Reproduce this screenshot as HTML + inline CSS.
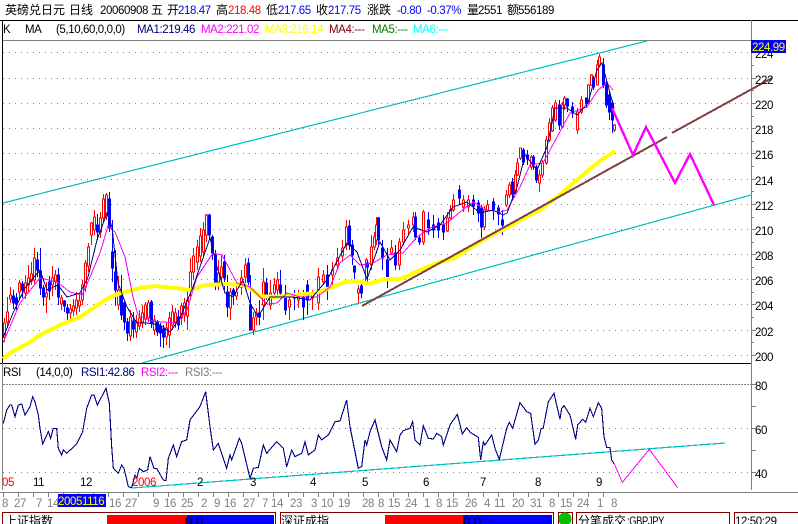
<!DOCTYPE html>
<html><head><meta charset="utf-8"><style>
html,body{margin:0;padding:0;background:#fff}
svg{display:block}
svg *{shape-rendering:crispEdges}
text{font-family:"Liberation Sans","WenQuanYi Zen Hei","Noto Sans CJK SC",sans-serif;font-size:11.5px;letter-spacing:-.4px;fill:#000}
text.h{font-size:12px;letter-spacing:0}
.c{fill:#0000ff}.r{fill:#ff0000}.g{fill:#808080}
</style></head><body>
<svg width="798" height="524" viewBox="0 0 798 524" xmlns="http://www.w3.org/2000/svg">
<rect width="798" height="524" fill="#fff"/>
<!-- frames -->
<path d="M0 20.5H798" stroke="#000" fill="none"/>
<path d="M3 40.5H751" stroke="#808080" fill="none"/>
<path d="M0 363.5H751" stroke="#000" fill="none"/>
<path d="M2.5 20V363" stroke="#000" fill="none"/>
<path d="M2.5 363V490" stroke="#808080" fill="none"/>
<path d="M751.5 20V490" stroke="#808080" fill="none"/>
<path d="M3 384.5H751" stroke="#808080" stroke-dasharray="2 1" fill="none"/>
<path d="M3 52.5H751M3 78.5H751M3 103.5H751M3 128.5H751M3 153.5H751M3 179.5H751M3 204.5H751M3 229.5H751M3 254.5H751M3 279.5H751M3 304.5H751M3 330.5H751M3 355.5H751M3 428.5H751M3 472.5H751" stroke="#808080" stroke-dasharray="1 5" fill="none"/>
<path d="M752 52.5h4M752 65.5h2M752 78.5h4M752 90.5h2M752 103.5h4M752 116.5h2M752 128.5h4M752 141.5h2M752 153.5h4M752 166.5h2M752 179.5h4M752 191.5h2M752 204.5h4M752 217.5h2M752 229.5h4M752 242.5h2M752 254.5h4M752 267.5h2M752 279.5h4M752 292.5h2M752 304.5h4M752 317.5h2M752 330.5h4M752 342.5h2M752 355.5h4M752 384.5h4M752 406.5h4M752 428.5h4M752 450.5h4M752 472.5h4" stroke="#808080" fill="none"/>

<!-- header -->
<text x="5" y="14" class="h">英磅兑日元</text>
<text x="69" y="14" class="h">日线</text>
<text x="100" y="14">20060908</text>
<text x="151" y="14" class="h">五</text>
<text x="167" y="14" class="h">开</text><text x="178" y="14" class="c">218.47</text>
<text x="216" y="14" class="h">高</text><text x="228" y="14" class="r">218.48</text>
<text x="266" y="14" class="h">低</text><text x="278" y="14" class="c">217.65</text>
<text x="316" y="14" class="h">收</text><text x="328" y="14" class="c">217.75</text>
<text x="367" y="14" class="h">涨跌</text>
<text x="397" y="14" class="c">-0.80</text><text x="427" y="14" class="c">-0.37%</text>
<text x="467" y="14" class="h">量</text><text x="478" y="14">2551</text>
<text x="507" y="14" class="h">额</text><text x="518" y="14">556189</text>

<text x="3" y="33">K</text><text x="25" y="33">MA</text>
<text x="56" y="33">(5,10,60,0,0,0)</text>
<text x="137" y="33" style="fill:#000080">MA1:219.46</text>
<text x="201" y="33" style="fill:#ff00ff">MA2:221.02</text>
<text x="265" y="33" style="fill:#ffff00">MA3:216.14</text>
<text x="329" y="33" style="fill:#800000">MA4:---</text>
<text x="372" y="33" style="fill:#008000">MA5:---</text>
<text x="413" y="33" style="fill:#00ffff">MA6:---</text>

<!-- channel lines -->
<g fill="none" stroke="#00bfbf" stroke-width="1.2">
<path d="M3 203L647 41"/>
<path d="M142 363L751 195"/>
</g>

<!-- candles -->
<path fill="none" stroke="#ff0000" d="M4.5 318V342M7.5 297V328M10.5 287V303M19.5 280V300M25.5 275V299M28.5 265V292M31.5 262V285M34.5 248V284M46.5 282V313M52.5 266V296M55.5 270V290M61.5 295V310M70.5 304V319M73.5 299V316M76.5 292V315M79.5 295V312M82.5 280V305M85.5 260V292M88.5 243V272M91.5 222V245M94.5 210V235M100.5 212V238M103.5 194V222M106.5 193V220M118.5 276V310M130.5 310V341M136.5 315V338M139.5 310V330M142.5 305V328M145.5 302V325M148.5 300V322M154.5 315V335M166.5 322V345M169.5 312V348M172.5 305V330M175.5 308V328M181.5 303V325M184.5 298V322M187.5 290V330M190.5 258V300M193.5 248V280M197.5 240V270M200.5 228V262M203.5 222V256M206.5 214V242M218.5 260V290M221.5 255V285M230.5 288V320M236.5 285V300M241.5 270V295M245.5 258V285M253.5 312V335M256.5 308V325M263.5 268V320M270.5 280V310M274.5 278V298M277.5 272V295M289.5 295V320M298.5 290V308M312.5 290V310M318.5 268V310M323.5 270V285M332.5 262V285M337.5 248V270M342.5 240V262M346.5 220V250M358.5 285V303M366.5 258V285M371.5 235V270M374.5 232V250M376.5 217V245M391.5 240V255M399.5 238V270M403.5 222V245M408.5 220V235M413.5 212V232M423.5 210V245M447.5 212V232M450.5 205V220M453.5 194V212M463.5 195V212M468.5 195V212M484.5 206V230M487.5 200V212M506.5 190V207M509.5 182V198M515.5 170V194M517.5 158V176M520.5 148V160M531.5 155V170M539.5 170V192M542.5 160V178M546.5 136V165M549.5 118V142M552.5 105V132M555.5 100V122M562.5 102V128M564.5 96V110M577.5 108V134M581.5 96V114M588.5 84V105M591.5 74V86M597.5 60V85M599.5 54V66M614.5 124V132"/>
<path fill="#fff" stroke="#ff0000" d="M3.5 323h2v14h-2zM6.5 312h2v10h-2zM9.5 295h2v4h-2zM18.5 283h2v9h-2zM24.5 283h2v10h-2zM27.5 278h2v7h-2zM30.5 274h2v7h-2zM33.5 258h2v22h-2zM45.5 293h2v4h-2zM51.5 278h2v7h-2zM54.5 275h2v6h-2zM60.5 298h2v6h-2zM69.5 309h2v4h-2zM72.5 306h2v5h-2zM75.5 300h2v8h-2zM78.5 301h2v5h-2zM81.5 285h2v15h-2zM84.5 263h2v24h-2zM87.5 247h2v19h-2zM90.5 223h2v12h-2zM93.5 217h2v13h-2zM99.5 218h2v14h-2zM102.5 199h2v19h-2zM105.5 195h2v21h-2zM117.5 290h2v15h-2zM129.5 317h2v19h-2zM135.5 322h2v10h-2zM138.5 318h2v8h-2zM141.5 313h2v9h-2zM144.5 305h2v14h-2zM147.5 303h2v15h-2zM153.5 320h2v10h-2zM165.5 328h2v9h-2zM168.5 318h2v17h-2zM171.5 312h2v13h-2zM174.5 313h2v9h-2zM180.5 306h2v12h-2zM183.5 303h2v12h-2zM186.5 300h2v16h-2zM189.5 272h2v16h-2zM192.5 256h2v16h-2zM196.5 247h2v15h-2zM199.5 236h2v20h-2zM202.5 230h2v22h-2zM205.5 215h2v20h-2zM217.5 273h2v9h-2zM220.5 267h2v10h-2zM229.5 292h2v16h-2zM235.5 292h2v4h-2zM240.5 278h2v9h-2zM244.5 265h2v12h-2zM252.5 318h2v12h-2zM255.5 313h2v4h-2zM262.5 282h2v23h-2zM269.5 293h2v12h-2zM273.5 285h2v8h-2zM276.5 280h2v10h-2zM288.5 300h2v7h-2zM297.5 297h2v3h-2zM311.5 293h2v5h-2zM317.5 277h2v26h-2zM322.5 275h2v7h-2zM331.5 270h2v5h-2zM336.5 258h2v7h-2zM341.5 248h2v8h-2zM345.5 227h2v18h-2zM357.5 289h2v4h-2zM365.5 260h2v23h-2zM370.5 247h2v18h-2zM373.5 237h2v10h-2zM375.5 225h2v15h-2zM390.5 248h2v5h-2zM398.5 242h2v23h-2zM402.5 230h2v12h-2zM407.5 225h2v3h-2zM412.5 217h2v8h-2zM422.5 212h2v30h-2zM446.5 218h2v13h-2zM449.5 210h2v8h-2zM452.5 200h2v10h-2zM462.5 200h2v7h-2zM467.5 200h2v7h-2zM483.5 210h2v17h-2zM486.5 205h2v5h-2zM505.5 195h2v10h-2zM508.5 185h2v10h-2zM514.5 175h2v17h-2zM516.5 163h2v12h-2zM519.5 148h2v10h-2zM530.5 157h2v10h-2zM538.5 175h2v8h-2zM541.5 163h2v12h-2zM545.5 140h2v23h-2zM548.5 123h2v17h-2zM551.5 108h2v23h-2zM554.5 103h2v17h-2zM561.5 105h2v22h-2zM563.5 98h2v7h-2zM576.5 112h2v18h-2zM580.5 100h2v12h-2zM587.5 85h2v18h-2zM590.5 75h2v10h-2zM596.5 65h2v20h-2zM598.5 57h2v8h-2zM613.5 125h2v5h-2z"/>
<path fill="#0000ff" stroke="#0000ff" d="M13.5 290V309M12.5 296h2v7h-2zM16.5 293V310M15.5 298h2v6h-2zM22.5 281V298M21.5 284h2v6h-2zM37.5 252V277M36.5 260h2v10h-2zM40.5 248V295M39.5 271h2v17h-2zM43.5 285V306M42.5 288h2v9h-2zM49.5 276V300M48.5 282h2v9h-2zM58.5 268V305M57.5 275h2v22h-2zM64.5 300V312M63.5 301h2v5h-2zM67.5 304V320M66.5 308h2v5h-2zM97.5 214V240M96.5 225h2v7h-2zM109.5 192V232M108.5 199h2v29h-2zM112.5 220V282M111.5 252h2v16h-2zM115.5 250V306M114.5 272h2v18h-2zM121.5 275V320M120.5 295h2v20h-2zM124.5 300V330M123.5 303h2v19h-2zM127.5 318V341M126.5 322h2v11h-2zM133.5 312V338M132.5 321h2v8h-2zM151.5 300V328M150.5 302h2v21h-2zM157.5 320V336M156.5 322h2v10h-2zM160.5 323V347M159.5 326h2v7h-2zM163.5 325V348M162.5 329h2v8h-2zM178.5 310V330M177.5 317h2v8h-2zM209.5 214V240M208.5 215h2v20h-2zM212.5 235V260M211.5 237h2v16h-2zM215.5 250V290M214.5 255h2v28h-2zM224.5 255V290M223.5 262h2v16h-2zM227.5 275V317M226.5 292h2v15h-2zM233.5 288V305M232.5 290h2v5h-2zM248.5 258V290M247.5 263h2v19h-2zM250.5 275V330M249.5 305h2v25h-2zM259.5 300V325M258.5 313h2v4h-2zM266.5 278V300M265.5 283h2v12h-2zM280.5 270V300M279.5 285h2v8h-2zM285.5 285V315M284.5 295h2v15h-2zM294.5 290V310M293.5 295h2v3h-2zM303.5 290V320M302.5 297h2v10h-2zM307.5 280V315M306.5 285h2v15h-2zM327.5 265V300M326.5 275h2v12h-2zM349.5 220V250M348.5 226h2v19h-2zM352.5 240V265M351.5 245h2v10h-2zM354.5 266V280M353.5 266h2v6h-2zM361.5 280V298M360.5 286h2v7h-2zM367.5 260V275M366.5 263h2v4h-2zM378.5 217V245M377.5 218h2v22h-2zM382.5 240V270M381.5 248h2v10h-2zM387.5 248V288M386.5 260h2v18h-2zM395.5 245V270M394.5 253h2v12h-2zM415.5 212V240M414.5 217h2v20h-2zM419.5 235V245M418.5 238h2v4h-2zM428.5 212V235M427.5 220h2v8h-2zM433.5 215V238M432.5 225h2v5h-2zM438.5 218V238M437.5 223h2v7h-2zM443.5 215V240M442.5 225h2v7h-2zM459.5 185V205M458.5 190h2v8h-2zM473.5 195V215M472.5 200h2v6h-2zM478.5 200V222M477.5 203h2v10h-2zM481.5 205V238M480.5 208h2v19h-2zM493.5 198V220M492.5 202h2v7h-2zM498.5 205V225M497.5 208h2v6h-2zM502.5 210V235M501.5 220h2v5h-2zM512.5 178V198M511.5 182h2v12h-2zM523.5 148V165M522.5 150h2v12h-2zM527.5 150V165M526.5 155h2v4h-2zM533.5 155V170M532.5 157h2v8h-2zM536.5 165V183M535.5 167h2v13h-2zM559.5 100V130M558.5 105h2v20h-2zM567.5 98V112M566.5 99h2v7h-2zM572.5 102V118M571.5 107h2v6h-2zM586.5 98V108M585.5 98h2v5h-2zM593.5 76V90M592.5 79h2v8h-2zM603.5 58V88M602.5 65h2v20h-2zM606.5 80V108M605.5 83h2v22h-2zM609.5 90V120M608.5 95h2v17h-2zM612.5 100V133M611.5 103h2v17h-2z"/>

<!-- moving averages -->
<polyline fill="none" stroke="#ffff00" stroke-width="4" points="3,359 10,353 30,342 40,335 60,325 80,317 95,307 105,300 115,295 125,292 140,288 155,286 175,288 190,290 205,285 225,284 245,285 260,296 275,297 295,295 315,293 330,288 345,282 358,281 368,284 385,279 400,279 403,278 420,270 440,262 455,258 470,248 490,236 507,228 520,220 540,210 557,197 577,180 597,163 615,151"/>
<polyline fill="none" stroke="#ff00ff" stroke-width="1" points="3,343 20,303 40,278 57,282 70,292 82,295 90,277 100,253 108,226 115,232 125,257 133,297 138,315 150,321 163,322 177,323 187,310 197,277 213,253 222,255 230,270 237,283 250,287 260,297 267,304 277,303 287,293 300,297 317,297 330,287 340,263 350,255 360,265 373,263 387,255 403,253 417,237 430,228 447,223 460,212 473,202 487,210 500,212 507,210 520,187 530,165 543,163 557,137 570,113 587,107 598,90 607,83 613,90"/>
<polyline fill="none" stroke="#000080" stroke-width="1" points="3,338 13,313 25,288 40,270 47,290 58,285 67,297 80,293 88,277 97,240 107,213 112,227 118,283 127,307 137,323 147,323 160,325 170,332 180,318 193,287 210,238 217,267 225,293 233,297 243,280 250,303 258,317 270,297 280,297 293,297 310,300 327,280 347,243 357,252 367,279 380,242 390,260 400,250 413,227 427,232 440,225 453,207 467,202 480,213 493,210 503,215 507,213 517,187 525,155 537,170 547,147 555,108 567,108 577,115 588,103 597,70 602,63 610,93 614,108"/>

<!-- drawings -->
<path d="M362 306L667 137M672 133L772 78" fill="none" stroke="#804040" stroke-width="2"/>
<polyline fill="none" stroke="#ff00ff" stroke-width="2.4" points="612,108 633,155 646,127 675,183 690,154 714,205"/>

<!-- price axis labels -->
<text x="755" y="84">222</text><text x="755" y="109">220</text><text x="755" y="134">218</text><text x="755" y="159">216</text><text x="755" y="185">214</text><text x="755" y="210">212</text><text x="755" y="235">210</text><text x="755" y="260">208</text><text x="755" y="285">206</text><text x="755" y="310">204</text><text x="755" y="336">202</text><text x="755" y="361">200</text>
<text x="755" y="58">224</text>
<rect x="751" y="40" width="35" height="13" fill="#0000ff"/>
<text x="752" y="51" style="fill:#ffff00">224.99</text>

<!-- RSI -->
<text x="3" y="376">RSI</text>
<text x="36" y="376">(14,0,0)</text>
<text x="81" y="376" style="fill:#000080">RSI1:42.86</text>
<text x="141" y="376" style="fill:#ff00ff">RSI2:---</text>
<text x="185" y="376" class="g">RSI3:---</text>
<text x="755" y="390">80</text><text x="755" y="434">60</text><text x="755" y="478">40</text>

<path d="M132 488L725 443" fill="none" stroke="#00bfbf" stroke-width="1.2"/>
<g transform="translate(0,360) scale(.33333)" fill="none" stroke="#000080" stroke-width="3.3">
<polyline points="10,190 20,150 30,135 35,135 45,170 55,135 65,132 75,165 90,140 98,110 105,125 115,165 120,205 128,252 145,215 152,235 160,205 170,205 175,265 185,285 190,270 200,280 230,252 248,215 260,145 275,105 282,105 292,135 318,85 328,130 335,260 340,325 355,340 365,315 372,325 385,380 395,383 405,345 410,355 418,325 430,335 443,330 450,290 462,325 470,325 490,360 498,362 505,295 520,255 530,290 545,245 560,240 570,180 600,140 617,95 630,200 640,270 655,250 680,325 690,285 695,300 718,235 725,250 750,355 760,325 775,322 790,255 800,280 830,245 850,265 860,320 875,270 885,290 905,280 915,245 925,285 945,270 955,225 965,240 985,225 1005,185 1020,183 1040,120 1050,200 1075,325 1085,320 1095,240 1100,255 1110,215 1125,180 1145,260 1160,300 1170,240 1190,275 1200,225"/>
<polyline transform="translate(1200,0)" points="0,225 10,212 30,205 38,185 45,240 60,255 70,197 85,235 100,237 110,220 125,230 130,255 150,195 172,163 187,222 200,203 212,218 235,232 242,300 250,245 255,255 275,225 285,265 298,298 320,205 328,187 338,205 360,128 380,155 392,160 405,253 415,240 423,207 430,203 445,125 462,100 480,178 485,145 492,137 510,165 527,238 533,195 548,178 557,187 570,145 580,170 595,128 605,145 612,230 620,262 630,262 635,300 643,312"/>
<polyline transform="translate(1200,0)" stroke="#ff00ff" stroke-width="3" points="643,312 667,367 748,268 833,383"/>
</g>

<!-- month labels -->
<text x="2" y="486" class="r">05</text><text x="33" y="486">11</text><text x="80" y="486">12</text><text x="132" y="486" class="r">2006</text><text x="197" y="486">2</text><text x="250" y="486">3</text><text x="310" y="486">4</text><text x="362" y="486">5</text><text x="423" y="486">6</text><text x="480" y="486">7</text><text x="535" y="486">8</text><text x="596" y="486">9</text>

<!-- date axis -->
<path d="M0 492.5H798" stroke="#808080" fill="none"/>
<path d="M3 495H612" stroke="#808080" stroke-width="4" stroke-dasharray="1 14" fill="none"/>
<g class="dates">
<text x="2" y="507" class="g">8</text><text x="14" y="507" class="g">27</text><text x="36" y="507" class="g">7</text><text x="47" y="507" class="g">14</text><text x="109" y="507" class="g">16</text><text x="125" y="507" class="g">27</text><text x="153" y="507" class="g">9</text><text x="164" y="507" class="g">16</text><text x="181" y="507" class="g">25</text><text x="201" y="507" class="g">2</text><text x="214" y="507" class="g">9</text><text x="224" y="507" class="g">16</text><text x="243" y="507" class="g">27</text><text x="262" y="507" class="g">7</text><text x="271" y="507" class="g">14</text><text x="290" y="507" class="g">23</text><text x="311" y="507" class="g">3</text><text x="321" y="507" class="g">10</text><text x="338" y="507" class="g">19</text><text x="362" y="507" class="g">28</text><text x="378" y="507" class="g">8</text><text x="388" y="507" class="g">15</text><text x="405" y="507" class="g">24</text><text x="424" y="507" class="g">1</text><text x="436" y="507" class="g">8</text><text x="446" y="507" class="g">15</text><text x="465" y="507" class="g">26</text><text x="484" y="507" class="g">4</text><text x="494" y="507" class="g">11</text><text x="512" y="507" class="g">20</text><text x="530" y="507" class="g">31</text><text x="549" y="507" class="g">8</text><text x="560" y="507" class="g">15</text><text x="577" y="507" class="g">24</text><text x="597" y="507" class="g">1</text><text x="611" y="507" class="g">8</text>
</g>
<rect x="58" y="494" width="48" height="13" fill="#0000ff"/>
<text x="58" y="505" style="fill:#ffff00">20051116</text>

<!-- status bar -->
<g fill="none" stroke="#800000">
<path d="M2.5 524V512.5H275.5V524"/>
<path d="M280.5 524V512.5H553.5V524"/>
<path d="M558.5 524V512.5H572.5V524"/>
<path d="M576.5 524V512.5H729.5V524"/>
<path d="M734.5 524V512.5H798"/>
</g>
<rect x="107" y="515" width="80" height="9" fill="#ff0000"/><rect x="187" y="515" width="87" height="9" fill="#0000ff"/>
<rect x="385" y="515" width="78" height="9" fill="#ff0000"/><rect x="463" y="515" width="89" height="9" fill="#0000ff"/>
<circle cx="565" cy="519" r="6.5" fill="#00c000"/>
<text x="5" y="525" class="h">上证指数</text>
<text x="185" y="526" style="font-size:13px;letter-spacing:0">0.0</text>
<text x="281" y="525" class="h">深证成指</text>
<text x="463" y="526" style="font-size:13px;letter-spacing:0">0.0</text>
<text x="578" y="525" class="h">分笔成交</text>
<text x="627" y="525" textLength="37" lengthAdjust="spacingAndGlyphs">:GBPJPY</text>
<text x="735" y="525">12:50:29</text>
</svg>
</body></html>
